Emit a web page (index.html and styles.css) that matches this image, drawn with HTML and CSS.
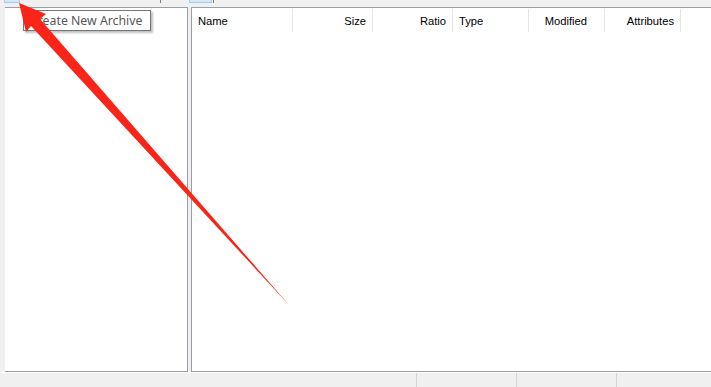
FILE: index.html
```html
<!DOCTYPE html>
<html lang="en">
<head>
    <meta charset="UTF-8">
    <title>Archive</title>
    <link rel="stylesheet" href="styles.css">
</head>
<body>
    <div class="toolbar">
        <span class="btn btn-new"></span>
        <span class="tick tick-a"></span>
        <span class="btn btn-view"></span>
        <span class="tick tick-b"></span>
    </div>
    <div class="main">
        <div class="tree"></div>
        <div class="splitter"></div>
        <div class="list">
            <div class="header">
                <div class="col col-name">Name</div>
                <div class="col col-size right">Size</div>
                <div class="col col-ratio right">Ratio</div>
                <div class="col col-type">Type</div>
                <div class="col col-mod right">Modified</div>
                <div class="col col-attr right">Attributes</div>
            </div>
        </div>
    </div>
    <div class="statusbar">
        <div class="cell cell-main"></div>
        <div class="cell"></div>
        <div class="cell"></div>
        <div class="cell"></div>
    </div>

    <div class="tooltip">Create New Archive</div>

    <!-- annotation arrow drawn on top of the screenshot -->
    <svg class="arrow" width="711" height="387" viewBox="0 0 711 387">
        <polygon fill="#fa2419" points="19,3 46,14 40,19 289,305 31,26 26,32"/>
    </svg>
</body>
</html>
```

FILE: styles.css
```css
body {
    margin: 0;
    width: 711px;
    height: 387px;
    overflow: hidden;
    background: #f0f0f0;
    font-family: "Liberation Sans", Arial, sans-serif;
    font-size: 11.2px;
    color: #000;
    position: relative;
}
.toolbar {
    height: 7px;
    position: relative;
}
.btn {
    position: absolute;
    top: 0;
    height: 2px;
    background: #d5e8f8;
    border: 1px solid #a9cbe8;
    border-top: none;
}
.btn-new {
    left: 4px;
    width: 14px;
}
.btn-view {
    left: 189px;
    width: 21px;
}
.tick {
    position: absolute;
    top: 0;
    width: 1px;
    height: 3px;
    background: #7a7a7a;
}
.tick-a { left: 160px; }
.tick-b { left: 213px; }
.main {
    display: flex;
    height: 365px;
    padding-left: 5px;
}
.tree {
    width: 182px;
    background: #fff;
    border: 1px solid #9c9ca4;
    border-left: none;
}
.splitter {
    width: 3px;
}
.list {
    flex: 1;
    background: #fff;
    border: 1px solid #9c9ca4;
    border-right: none;
}
.header {
    display: flex;
    height: 25px;
    align-items: stretch;
}
.col {
    box-sizing: border-box;
    padding: 0 6px;
    line-height: 24px;
    border-right: 1px solid #e5e5e5;
    margin: 1px 0 1px;
}
.right { text-align: right; }
.col-name { width: 101px; }
.col-size { width: 80px; }
.col-ratio { width: 80px; }
.col-type { width: 76px; }
.col-mod { width: 76px; padding-right: 17px; }
.col-attr { width: 76px; }
.statusbar {
    display: flex;
    height: 14px;
    border-top: 1px solid #fff;
}
.cell {
    flex-shrink: 0;
    width: 99px;
    border-left: 1px solid #d4d4d4;
}
.cell-main {
    width: 416px;
    border-left: none;
}
.tooltip {
    position: absolute;
    left: 23px;
    top: 10px;
    width: 128px;
    height: 21px;
    line-height: 19px;
    padding-left: 6px;
    box-sizing: border-box;
    background: #fff;
    border: 1px solid #767676;
    color: #575757;
    font-family: "Noto Sans", "Open Sans", sans-serif;
    font-size: 12.3px;
    box-shadow: 2px 2px 2px rgba(0,0,0,0.25);
    white-space: nowrap;
}
.arrow {
    position: absolute;
    left: 0;
    top: 0;
}
```
